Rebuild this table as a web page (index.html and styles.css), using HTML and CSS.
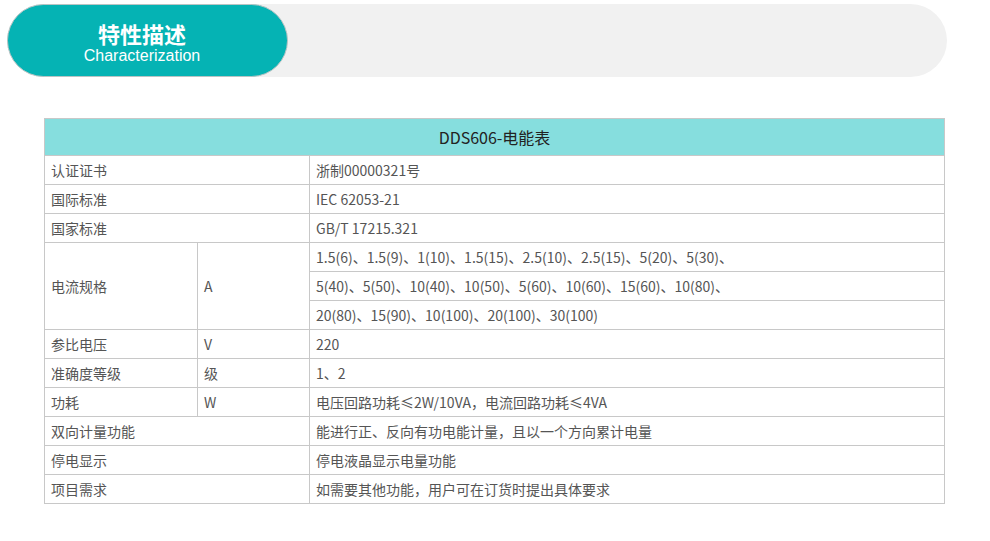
FILE: index.html
```html
<!DOCTYPE html>
<html lang="zh-CN">
<head>
<meta charset="utf-8">
<title>特性描述</title>
<link rel="stylesheet" href="styles.css">
</head>
<body>
<div class="banner">
  <div class="pill">
    <div class="pill-cn">特性描述</div>
    <div class="pill-en">Characterization</div>
  </div>
</div>

<table class="spec">
  <colgroup>
    <col class="c1"><col class="c2"><col class="c3">
  </colgroup>
  <thead>
    <tr><th colspan="3">DDS606-电能表</th></tr>
  </thead>
  <tbody>
    <tr><td colspan="2">认证证书</td><td>浙制00000321号</td></tr>
    <tr><td colspan="2">国际标准</td><td>IEC 62053-21</td></tr>
    <tr><td colspan="2">国家标准</td><td>GB/T 17215.321</td></tr>
    <tr><td rowspan="3">电流规格</td><td rowspan="3">A</td><td>1.5(6)、1.5(9)、1(10)、1.5(15)、2.5(10)、2.5(15)、5(20)、5(30)、</td></tr>
    <tr><td>5(40)、5(50)、10(40)、10(50)、5(60)、10(60)、15(60)、10(80)、</td></tr>
    <tr><td>20(80)、15(90)、10(100)、20(100)、30(100)</td></tr>
    <tr><td>参比电压</td><td>V</td><td>220</td></tr>
    <tr><td>准确度等级</td><td>级</td><td>1、2</td></tr>
    <tr><td>功耗</td><td>W</td><td>电压回路功耗≤2W/10VA，电流回路功耗≤4VA</td></tr>
    <tr><td colspan="2">双向计量功能</td><td>能进行正、反向有功电能计量，且以一个方向累计电量</td></tr>
    <tr><td colspan="2">停电显示</td><td>停电液晶显示电量功能</td></tr>
    <tr><td colspan="2">项目需求</td><td>如需要其他功能，用户可在订货时提出具体要求</td></tr>
  </tbody>
</table>
</body>
</html>
```

FILE: styles.css
```css
html, body {
  margin: 0;
  padding: 0;
  background: #fff;
}

body {
  font-family: "Noto Sans CJK SC", "Noto Sans", sans-serif;
  padding-top: 4px;
}

.banner {
  margin-left: 7px;
  width: 940px;
  height: 73px;
  border-radius: 37px;
  background: #f1f1f1;
  display: flex;
}

.pill {
  width: 268px;
  height: 67px;
  padding-top: 4px;
  padding-right: 11px;
  border-radius: 37px;
  background: #05b3b4;
  border: 1px solid #b9c4c4;
  display: flex;
  flex-direction: column;
  align-items: center;
  justify-content: center;
  box-sizing: content-box;
  color: #fff;
}

.pill-cn {
  font-family: "Noto Sans CJK SC", sans-serif;
  font-weight: 700;
  font-size: 22px;
  line-height: 24px;
}

.pill-en {
  font-family: "Liberation Sans", Arial, sans-serif;
  font-size: 16px;
  line-height: 18px;
  margin-top: 2px;
}

.spec {
  margin: 41px 0 0 44px;
  width: 900px;
  border-collapse: collapse;
  table-layout: fixed;
  font-size: 14px;
  color: #555;
}

.spec .c1 { width: 153px; }
.spec .c2 { width: 112px; }
.spec .c3 { width: 635px; }

.spec th {
  background: #86dede;
  color: #222;
  font-weight: 400;
  font-size: 16px;
  height: 36px;
  line-height: 20px;
  padding: 0;
  border: 1px solid #c8c8c8;
  text-align: center;
  vertical-align: middle;
}

.spec td {
  border: 1px solid #c8c8c8;
  height: 28px;
  line-height: 20px;
  padding: 0 6px;
  text-align: left;
  vertical-align: middle;
  white-space: nowrap;
}
```
